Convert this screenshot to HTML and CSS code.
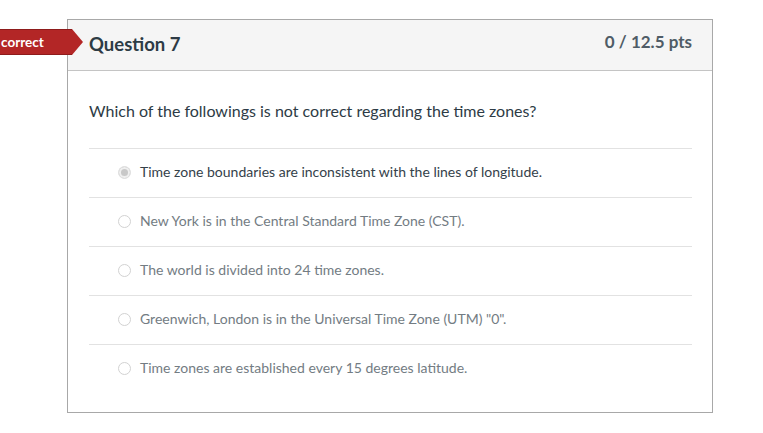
FILE: index.html
```html
<!DOCTYPE html>
<html>
<head>
<meta charset="utf-8">
<link rel="stylesheet" href="styles.css">
</head>
<body>
<div class="page">
  <div class="banner"><span class="banner-text">correct</span></div>
  <div class="card">
    <div class="card-header">
      <span class="q-title">Question 7</span>
      <span class="q-pts">0 / 12.5 pts</span>
    </div>
    <div class="card-body">
      <p class="q-text">Which of the followings is not correct regarding the time zones?</p>
      <div class="answers">
        <div class="answer selected"><span class="radio"></span><span class="a-text">Time zone boundaries are inconsistent with the lines of longitude.</span></div>
        <div class="answer"><span class="radio"></span><span class="a-text">New York is in the Central Standard Time Zone (CST).</span></div>
        <div class="answer"><span class="radio"></span><span class="a-text">The world is divided into 24 time zones.</span></div>
        <div class="answer"><span class="radio"></span><span class="a-text">Greenwich, London is in the Universal Time Zone (UTM) "0".</span></div>
        <div class="answer"><span class="radio"></span><span class="a-text">Time zones are established every 15 degrees latitude.</span></div>
      </div>
    </div>
  </div>
</div>
</body>
</html>
```

FILE: styles.css
```css
html, body {
  margin: 0;
  padding: 0;
  background: #ffffff;
  font-family: Lato, "Open Sans", "Liberation Sans", sans-serif;
  color: #2d3b45;
}
.page {
  position: relative;
  padding: 19px 0 0 67px;
  width: 646px;
}
.banner {
  position: absolute;
  left: 0;
  top: 29px;
  width: 72px;
  height: 26px;
  background: #b32626;
  border-top: 1px solid #8e1b1b;
  border-bottom: 1px solid #8e1b1b;
  box-sizing: border-box;
  display: flex;
  align-items: center;
}
.banner::after {
  content: "";
  position: absolute;
  right: -11px;
  top: -1px;
  width: 0;
  height: 0;
  border-top: 13px solid transparent;
  border-bottom: 13px solid transparent;
  border-left: 11px solid #b32626;
}
.banner-text {
  color: #ffffff;
  font-weight: 700;
  font-size: 13.5px;
  padding-left: 1px;
  margin-top: -1px;
}
.card {
  border: 1px solid #a8a8a8;
  box-sizing: border-box;
  width: 646px;
  height: 394px;
}
.card-header {
  height: 50px;
  background: #f5f5f5;
  border-bottom: 1px solid #c4c4c4;
  display: flex;
  justify-content: space-between;
  align-items: flex-start;
  padding: 0 20px 0 21px;
}
.q-title {
  font-size: 18.5px;
  font-weight: 700;
  margin-top: 13px;
  color: #2d3b45;
}
.q-pts {
  font-size: 17px;
  font-weight: 700;
  margin-top: 11px;
  color: #4f5c66;
}
.card-body {
  padding: 0 20px 0 21px;
}
.q-text {
  margin: 29px 0 26px 0;
  font-size: 16px;
  line-height: 22px;
  color: #2d3b45;
}
.answer {
  border-top: 1px solid #e2e2e2;
  height: 48px;
  box-sizing: content-box;
  display: flex;
  align-items: center;
  padding-left: 29px;
  font-size: 14px;
  color: #737c83;
}
.a-text {
  margin-top: -3px;
}
.answer.selected {
  color: #34414a;
}
.radio {
  width: 11px;
  height: 11px;
  border-radius: 50%;
  border: 1px solid #d2d2d2;
  background: #fff;
  margin-right: 9px;
  margin-top: -1px;
  flex: none;
}
.answer.selected .radio {
  background: #c8c8c8;
  border-color: #e0e0e0;
  box-shadow: inset 0 0 0 2px #efefef;
}
```
